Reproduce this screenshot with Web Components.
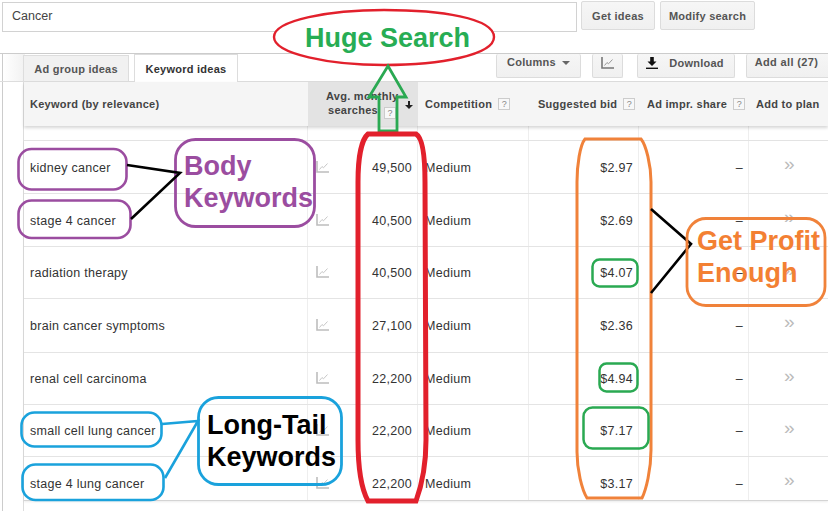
<!DOCTYPE html>
<html>
<head>
<meta charset="utf-8">
<title>Keyword ideas</title>
<style>
  html, body { margin: 0; background: #fff; }
  body { font-family: "Liberation Sans", Arial, sans-serif; }
</style>
</head>
<body>
<planner-page>
  <search-bar value="Cancer"></search-bar>
  <idea-toolbar></idea-toolbar>
  <keyword-table>
    <keyword-row h="53" pad="19" keyword="kidney cancer" searches="49,500" bid="$2.97"></keyword-row>
    <keyword-row h="53" pad="19" keyword="stage 4 cancer" searches="40,500" bid="$2.69"></keyword-row>
    <keyword-row h="52" pad="18" keyword="radiation therapy" searches="40,500" bid="$4.07"></keyword-row>
    <keyword-row h="54" pad="19" keyword="brain cancer symptoms" searches="27,100" bid="$2.36"></keyword-row>
    <keyword-row h="52" pad="18" keyword="renal cell carcinoma" searches="22,200" bid="$4.94"></keyword-row>
    <keyword-row h="52" pad="18" keyword="small cell lung cancer" searches="22,200" bid="$7.17"></keyword-row>
    <keyword-row h="43" pad="19" keyword="stage 4 lung cancer" searches="22,200" bid="$3.17"></keyword-row>
  </keyword-table>
  <annotation-layer>
    <call-out x="305" y="22" color="#27ad54">Huge Search</call-out>
    <call-out x="184" y="150" color="#9b4da0">Body<br>Keywords</call-out>
    <call-out x="697" y="225" color="#f38033">Get Profit<br>Enough</call-out>
    <call-out x="207" y="409" color="#000">Long-Tail<br>Keywords</call-out>
  </annotation-layer>
</planner-page>

<script>
const TREND = (stroke, thin) => `
  <svg width="13" height="12" viewBox="0 0 13 12" fill="none">
    <path d="M1 0V11H13" stroke="${stroke}" stroke-width="1.6"/>
    <path d="M3.5 8.5L6 5.5L7.5 6.8L11.5 2.5" stroke="${thin}" stroke-width="1"/>
  </svg>`;

class PlannerPage extends HTMLElement {
  constructor() {
    super();
    this.attachShadow({ mode: 'open' });
    this.shadowRoot.innerHTML = `
      <style>
        :host {
          display: block;
          position: relative;
          width: 828px;
          height: 511px;
          overflow: hidden;
          background: #fff;
          color: #333;
          font-family: "Liberation Sans", Arial, sans-serif;
        }
      </style>
      <slot></slot>`;
  }
}

class ActionButton extends HTMLElement {
  constructor() {
    super();
    this.attachShadow({ mode: 'open' });
    this.shadowRoot.innerHTML = `
      <style>
        :host {
          display: flex;
          align-items: center;
          justify-content: center;
          gap: 9px;
          box-sizing: border-box;
          border: 1px solid #dcdcdc;
          border-radius: 2px;
          background: linear-gradient(#f6f6f6, #f0f0f0);
          color: #555;
          font-size: 11px;
          font-weight: bold;
          letter-spacing: .25px;
          white-space: nowrap;
        }
      </style>
      <slot></slot>`;
  }
}

class SearchBar extends HTMLElement {
  constructor() {
    super();
    this.attachShadow({ mode: 'open' });
    this.shadowRoot.innerHTML = `
      <style>
        :host {
          display: flex;
          box-sizing: border-box;
          height: 53px;
          padding: 1px 0 0 2px;
          align-items: flex-start;
        }
        .field {
          box-sizing: border-box;
          width: 575px;
          height: 30px;
          margin: 1px 4px 0 0;
          padding: 0 9px;
          border: 1px solid #d2d2d2;
          color: #444;
          font-size: 12.5px;
          line-height: 27px;
        }
        action-button { height: 29px; }
        .ideas { width: 74px; margin-right: 5px; }
        .modify { width: 95px; }
      </style>
      <div class="field"></div>
      <action-button class="ideas">Get ideas</action-button>
      <action-button class="modify">Modify search</action-button>`;
  }
  connectedCallback() {
    this.shadowRoot.querySelector('.field').textContent = this.getAttribute('value');
  }
}

class IdeaToolbar extends HTMLElement {
  constructor() {
    super();
    this.attachShadow({ mode: 'open' });
    this.shadowRoot.innerHTML = `
      <style>
        :host {
          display: flex;
          box-sizing: border-box;
          height: 29px;
          border-top: 1px solid #ccc;
          border-bottom: 1px solid #ddd;
          align-items: flex-start;
        }
        .gutter {
          box-sizing: border-box;
          width: 23px;
          height: 27px;
          border-left: 1px solid #ccc;
          background: linear-gradient(90deg, #fff, #f1f1f1);
          margin-left: 2px;
          margin-right: -2px;
          flex: none;
        }
        .tab {
          box-sizing: border-box;
          height: 27px;
          border: 1px solid #ddd;
          border-bottom: 0;
          font-size: 11px;
          font-weight: bold;
          letter-spacing: .25px;
          line-height: 29px;
          text-align: center;
          color: #555;
          flex: none;
        }
        .off { width: 106px; margin-top: 1px; height: 26px; line-height: 27px; background: #f1f1f1; margin-right: 5px; }
        .on { width: 104px; height: 28px; background: #fff; color: #333; position: relative; }
        .tools { display: flex; margin-left: auto; }
        action-button { height: 24px; border-top: 0; }
        .columns { width: 85px; margin-right: 11px; gap: 6px; padding-bottom: 7px; }
        .chart { width: 31px; margin-right: 14px; padding-bottom: 5px; }
        .download { width: 98px; margin-right: 11px; padding-bottom: 5px; gap: 11px; padding-right: 2px; }
        .all { width: 85px; margin-right: -3px; padding: 0 4px 7px 0; letter-spacing: .35px; }
        .caret { width: 0; height: 0; border: 4px solid transparent; border-top: 4px solid #666; border-bottom: 0; margin-top: 2px; }
        svg { display: block; }
      </style>
      <div class="gutter"></div>
      <div class="tab off">Ad group ideas</div>
      <div class="tab on">Keyword ideas</div>
      <div class="tools">
        <action-button class="columns">Columns <span class="caret"></span></action-button>
        <action-button class="chart">${TREND('#777', '#999')}</action-button>
        <action-button class="download">
          <svg width="12" height="12" viewBox="0 0 12 12"><path d="M4.2 0H7.8V4.5H10.5L6 9L1.5 4.5H4.2Z" fill="#111"/><rect x="0" y="10.6" width="12" height="1.4" fill="#111"/></svg>
          Download
        </action-button>
        <action-button class="all">Add all (27)</action-button>
      </div>`;
  }
}

const COLUMNS = '284px 110px 111px 110px 110px 80px';

class KeywordTable extends HTMLElement {
  constructor() {
    super();
    this.attachShadow({ mode: 'open' });
    this.shadowRoot.innerHTML = `
      <style>
        :host {
          display: block;
          box-sizing: border-box;
          height: 429px;
          margin-left: 2px;
          padding-left: 20px;
          border-left: 1px solid #ccc;
        }
        .frame { height: 100%; border-left: 1px solid #ddd; }
        .head {
          display: grid;
          grid-template-columns: ${COLUMNS};
          height: 44px;
          background: #f5f5f5;
          box-shadow: 0 2px 3px rgba(0, 0, 0, .16);
          font-size: 11px;
          font-weight: bold;
          letter-spacing: .27px;
          color: #444;
          position: relative;
        }
        .head > div { display: flex; align-items: center; white-space: nowrap; padding-bottom: 1px; }
        .kw { padding-left: 6px; }
        .avg { background: #e3e3e3; padding-left: 18px; line-height: 14px; }
        .avg .label { width: 72px; text-align: center; }
        .sort { margin: 3px 0 0 7px; }
        .comp { padding-left: 7px; }
        .bid { padding-left: 9px; }
        .share { padding-left: 8px; }
        .plan { padding-left: 7px; }
        .help {
          display: inline-block;
          box-sizing: border-box;
          width: 12px;
          height: 12px;
          margin-left: 6px;
          border: 1px solid #ccc;
          background: #f8f8f8;
          color: #888;
          font-size: 9px;
          font-weight: normal;
          line-height: 10px;
          text-align: center;
          letter-spacing: 0;
          vertical-align: -2px;
        }
        .spacer {
          display: grid;
          grid-template-columns: ${COLUMNS};
          height: 14px;
          border-bottom: 1px solid #e4e4e4;
        }
        .spacer div { border-right: 1px solid #eee; }
        .spacer div:last-child { border-right: 0; }
        .rows { border-bottom: 1px solid #d4d4d4; box-shadow: 0 1px 2px rgba(0, 0, 0, .08); }
      </style>
      <div class="frame">
        <div class="head">
          <div class="kw">Keyword (by relevance)</div>
          <div class="avg">
            <span class="label">Avg. monthly<br>searches<span class="help">?</span></span>
            <svg class="sort" width="8" height="8" viewBox="0 0 8 8"><path d="M3 0H5V4H8L4 8L0 4H3Z" fill="#222"/></svg>
          </div>
          <div class="comp">Competition<span class="help">?</span></div>
          <div class="bid">Suggested bid<span class="help">?</span></div>
          <div class="share">Ad impr. share<span class="help">?</span></div>
          <div class="plan">Add to plan</div>
        </div>
        <div class="spacer"><div></div><div></div><div></div><div></div><div></div><div></div></div>
        <div class="rows"><slot></slot></div>
      </div>`;
  }
}

class KeywordRow extends HTMLElement {
  constructor() {
    super();
    this.attachShadow({ mode: 'open' });
    this.shadowRoot.innerHTML = `
      <style>
        :host {
          display: grid;
          grid-template-columns: ${COLUMNS};
          box-sizing: border-box;
          border-bottom: 1px solid #e4e4e4;
          font-size: 12.5px;
          letter-spacing: .28px;
          line-height: 16px;
          color: #333;
        }
        :host(:last-child) { border-bottom: 0; }
        .cell { border-right: 1px solid #eee; padding-top: var(--pad, 18px); white-space: nowrap; }
        .cell:last-child { border-right: 0; }
        .kw { padding-left: 6px; }
        .num { display: flex; justify-content: space-between; padding-left: 8px; padding-right: 5px; }
        .num svg { margin-top: 1px; }
        .comp { padding-left: 7px; }
        .bid { text-align: right; padding-right: 5px; }
        .share { text-align: right; padding-right: 5px; }
        .add { color: #bbb; font-size: 19px; padding: 15px 0 0 35px; letter-spacing: 0; }
      </style>
      <div class="cell kw"></div>
      <div class="cell num">${TREND('#bdbdbd', '#c8c8c8')}<span class="searches"></span></div>
      <div class="cell comp">Medium</div>
      <div class="cell bid"></div>
      <div class="cell share">–</div>
      <div class="cell add">»</div>`;
  }
  connectedCallback() {
    this.style.height = this.getAttribute('h') + 'px';
    this.style.setProperty('--pad', this.getAttribute('pad') + 'px');
    this.shadowRoot.querySelector('.kw').textContent = this.getAttribute('keyword');
    this.shadowRoot.querySelector('.searches').textContent = this.getAttribute('searches');
    this.shadowRoot.querySelector('.bid').textContent = this.getAttribute('bid');
  }
}

class AnnotationLayer extends HTMLElement {
  constructor() {
    super();
    this.attachShadow({ mode: 'open' });
    this.shadowRoot.innerHTML = `
      <style>
        :host { position: absolute; inset: 0; display: block; pointer-events: none; }
        svg { position: absolute; left: 0; top: 0; }
        .red { stroke: #e2202c; }
        .orange { stroke: #f0823a; }
        .purple { stroke: #9b4da0; }
        .blue { stroke: #1aa2dc; }
        .green { stroke: #2aa952; }
        .black { stroke: #000; }
      </style>
      <svg width="828" height="511" viewBox="0 0 828 511" fill="none" stroke-width="2.6">
        <path class="red" d="M274 37C274 20 330 10 384 10C440 10 494 18 494 37C494 55 440 65 384 65C330 65 274 54 274 37Z" fill="#fff" stroke-width="2.4"/>
        <path class="green" d="M388 66L369 97H379V131H397V97H406Z" stroke-width="2.8"/>
        <path class="red" d="M368 134H416C423 138 425 160 425 182L426 440C426 470 420 490 416 501H368C362 490 358 470 358 440L358 182C358 160 361 140 368 134Z" stroke-width="5"/>
        <path class="orange" d="M585 139H641C646 145 651 165 651 182V450C651 470 646 490 642 498H587C582 490 577 470 577 452V182C577 165 580 145 585 139Z" stroke-width="3"/>
        <rect class="green" x="592.5" y="259.5" width="45" height="27" rx="7" stroke-width="2.5"/>
        <rect class="green" x="599.5" y="363.5" width="38" height="28" rx="7" stroke-width="2.5"/>
        <rect class="green" x="583.5" y="407.5" width="65" height="41" rx="9" stroke-width="2.5"/>
        <path class="black" d="M651 209L691 244L651 293"/>
        <rect class="orange" x="687" y="218.5" width="138" height="87" rx="19" stroke-width="2.8"/>
        <rect class="purple" x="175.5" y="139.5" width="139" height="87" rx="20" stroke-width="2.8"/>
        <rect class="purple" x="18.5" y="149" width="108" height="40.5" rx="13"/>
        <rect class="purple" x="18.5" y="200.5" width="112" height="37.5" rx="13"/>
        <path class="black" d="M127 165L180 173L131 219"/>
        <rect class="blue" x="198.5" y="397.5" width="143" height="87" rx="20" stroke-width="2.8"/>
        <rect class="blue" x="21.5" y="412.5" width="140" height="34" rx="13"/>
        <rect class="blue" x="22.5" y="464.5" width="141" height="35.5" rx="13"/>
        <path class="blue" d="M162 424L198 421L165 478"/>
      </svg>
      <slot></slot>`;
  }
}

class CallOut extends HTMLElement {
  constructor() {
    super();
    this.attachShadow({ mode: 'open' });
    this.shadowRoot.innerHTML = `
      <style>
        :host {
          position: absolute;
          display: block;
          font-size: 27px;
          font-weight: bold;
          line-height: 32px;
          white-space: nowrap;
        }
      </style>
      <slot></slot>`;
  }
  connectedCallback() {
    this.style.left = this.getAttribute('x') + 'px';
    this.style.top = this.getAttribute('y') + 'px';
    this.style.color = this.getAttribute('color');
  }
}

customElements.define('planner-page', PlannerPage);
customElements.define('action-button', ActionButton);
customElements.define('search-bar', SearchBar);
customElements.define('idea-toolbar', IdeaToolbar);
customElements.define('keyword-table', KeywordTable);
customElements.define('keyword-row', KeywordRow);
customElements.define('annotation-layer', AnnotationLayer);
customElements.define('call-out', CallOut);
</script>
</body>
</html>
